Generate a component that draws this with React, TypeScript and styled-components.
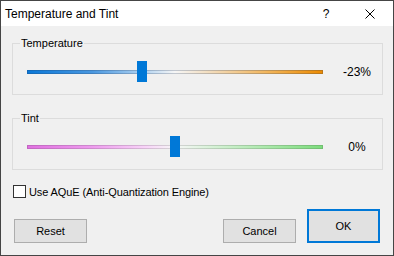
import styled, { createGlobalStyle } from "styled-components"

const GlobalStyle = createGlobalStyle`
	body {
		margin: 0;
		background: #ffffff;
		font-family: "Liberation Sans", Arial, sans-serif;
		font-size: 12px;
		color: #000;
	}
`

const sliders = [
	{
		label: "Temperature",
		value: -0.23,
		text: "-23%",
		gradient: "linear-gradient(to right, #0a78d8 0%, #4a98e0 22%, #a8cef0 38%, #f6f6f6 50%, #f2dcbc 62%, #f2b458 82%, #ec8a00 100%)",
		edge: "rgba(40, 60, 90, 0.25)",
	},
	{
		label: "Tint",
		value: 0,
		text: "0%",
		gradient: "linear-gradient(to right, #e070e0 0%, #ee9cee 22%, #f8d4f8 40%, #f6f6f6 50%, #d8f2d8 62%, #a8e8a8 82%, #7cdc7c 100%)",
		edge: "rgba(60, 60, 60, 0.18)",
	},
]

const CloseIcon = () => (
	<svg width="10" height="10" viewBox="0 0 10 10">
		<path d="M0.5 0.5 L9.5 9.5 M9.5 0.5 L0.5 9.5" stroke="#000" strokeWidth="1" fill="none" />
	</svg>
)

const App = () => {
	return (
		<>
			<GlobalStyle />
			<Window>
				<TitleBar>
					<Title>Temperature and Tint</Title>
					<HelpButton>?</HelpButton>
					<CloseButton>
						<CloseIcon />
					</CloseButton>
				</TitleBar>
				<Body>
					{sliders.map((s) => (
						<Group key={s.label}>
							<Legend>{s.label}</Legend>
							<SliderRow>
								<TrackArea>
									<Track $gradient={s.gradient} $edge={s.edge} />
									<Thumb style={{ left: Math.round(143 + s.value * 145) }} />
								</TrackArea>
								<Value>{s.text}</Value>
							</SliderRow>
						</Group>
					))}
					<CheckRow>
						<CheckBox />
						<span>Use AQuE (Anti-Quantization Engine)</span>
					</CheckRow>
					<ButtonRow>
						<Button>Reset</Button>
						<Spacer />
						<Button>Cancel</Button>
						<Button $primary>OK</Button>
					</ButtonRow>
				</Body>
			</Window>
		</>
	)
}

export default App

const Window = styled.div`
	width: 394px;
	height: 256px;
	box-sizing: border-box;
	border: 1px solid #454545;
	background: #f0f0f0;
	display: flex;
	flex-direction: column;
`

const TitleBar = styled.div`
	height: 25px;
	background: #ffffff;
	display: flex;
	align-items: center;
	padding-left: 4px;
`

const Title = styled.div`
	flex: 1;
	font-size: 12px;
	line-height: 16px;
`

const HelpButton = styled.div`
	width: 46px;
	text-align: center;
	font-size: 12px;
	padding-left: 6px;
	box-sizing: border-box;
`

const CloseButton = styled.div`
	width: 46px;
	height: 25px;
	display: flex;
	align-items: center;
	justify-content: center;
	margin-right: 1px;
	svg {
		margin-left: 1px;
	}
`

const Body = styled.div`
	flex: 1;
	display: flex;
	flex-direction: column;
	padding: 17px 10px 12px 11px;
`

const Group = styled.div`
	position: relative;
	height: 52px;
	box-sizing: border-box;
	margin-bottom: 23px;
	padding: 17px 0 12px 14px;
	border: 1px solid #dcdcdc;
`

const Legend = styled.div`
	position: absolute;
	top: -8px;
	left: 7px;
	padding: 0 1px;
	background: #f0f0f0;
	font-size: 11px;
	line-height: 15px;
`

const SliderRow = styled.div`
	display: flex;
	align-items: center;
	height: 21px;
`

const TrackArea = styled.div`
	position: relative;
	width: 296px;
	height: 21px;
	display: flex;
	align-items: center;
`

const Track = styled.div<{ $gradient: string; $edge: string }>`
	width: 100%;
	height: 4px;
	background: ${(p) => p.$gradient};
	box-shadow: inset 0 0 0 1px ${(p) => p.$edge};
`

const Thumb = styled.div`
	position: absolute;
	top: 0;
	width: 10px;
	height: 21px;
	background: #0078d7;
`

const Value = styled.div`
	width: 40px;
	margin-left: 14px;
	text-align: center;
	font-size: 12px;
`

const CheckRow = styled.div`
	display: flex;
	align-items: center;
	gap: 3px;
	height: 13px;
	margin-top: -8px;
	padding-left: 1px;
	font-size: 11px;
	letter-spacing: -0.1px;
`

const CheckBox = styled.div`
	width: 11px;
	height: 11px;
	border: 1px solid #333333;
	background: #ffffff;
`

const ButtonRow = styled.div`
	margin-top: auto;
	display: flex;
	align-items: flex-end;
	gap: 11px;
	padding: 0 3px 0 2px;
`

const Spacer = styled.div`
	flex: 1;
`

const Button = styled.div<{ $primary?: boolean }>`
	width: 73px;
	height: ${(p) => (p.$primary ? "34px" : "24px")};
	box-sizing: border-box;
	border: ${(p) => (p.$primary ? "2px solid #0078d7" : "1px solid #adadad")};
	background: #e1e1e1;
	display: flex;
	align-items: center;
	justify-content: center;
	font-size: 11px;
`
